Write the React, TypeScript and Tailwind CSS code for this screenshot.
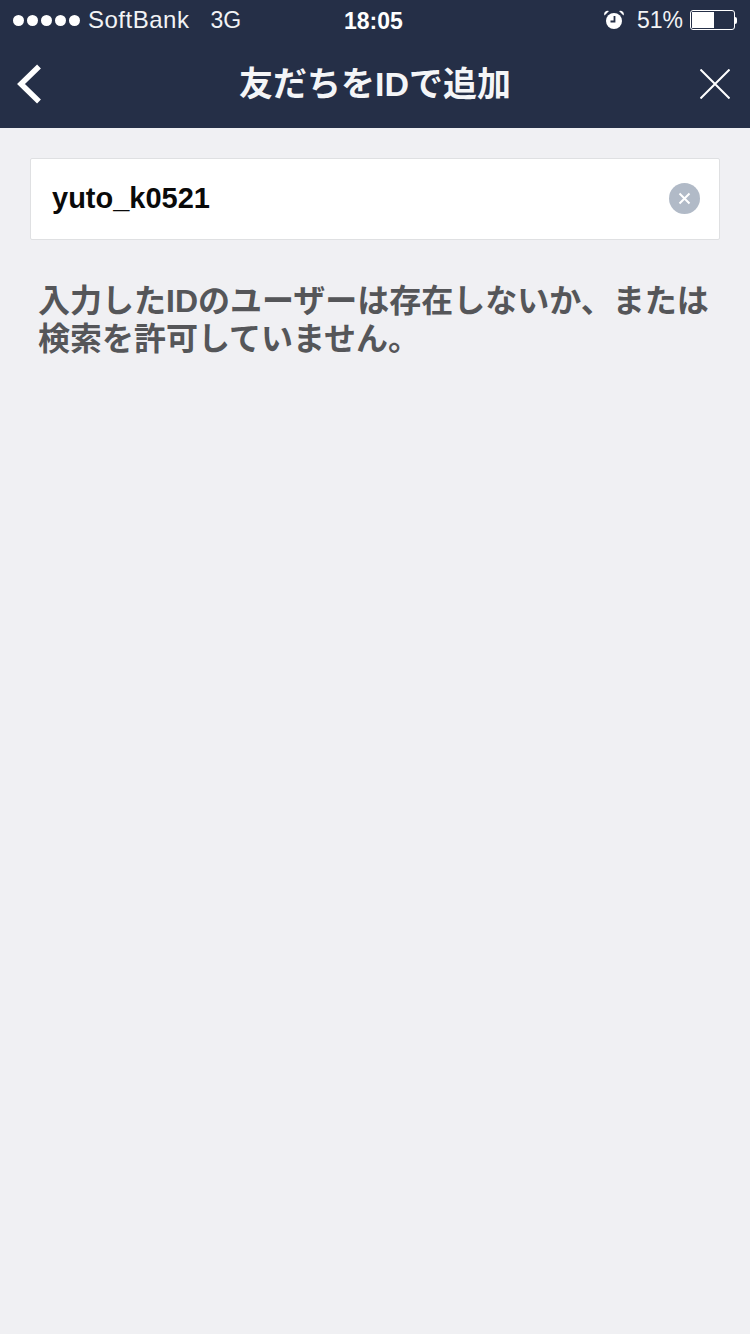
import React from 'react';

const FONT = "font-['Liberation_Sans','Noto_Sans_CJK_JP',sans-serif]";

const AlarmIcon = () => (
  <svg width="20" height="20" viewBox="0 0 20 20" className="shrink-0">
    <circle cx="10" cy="11" r="8" fill="#fff" />
    <path d="M0.5 5.5 L5 1 A3.4 3.4 0 0 0 0.5 5.5Z" fill="#fff" />
    <path d="M19.5 5.5 L15 1 A3.4 3.4 0 0 1 19.5 5.5Z" fill="#fff" />
    <path d="M10.5 6 V11.5 H6.5" stroke="#252f47" strokeWidth="1.8" fill="none" />
  </svg>
);

const StatusBar = () => (
  <div className="relative flex h-10 items-center justify-between pl-[13px] pr-[13px] text-white">
    <div className="flex items-center">
      <div className="flex gap-[3px]">
        {[0, 1, 2, 3, 4].map((i) => (
          <span key={i} className="h-[11px] w-[11px] rounded-full bg-white" />
        ))}
      </div>
      <span className="ml-[8px] text-[24px] leading-none tracking-[0.5px] text-[#f2f3f5]">SoftBank</span>
      <span className="ml-[21px] text-[23px] leading-none text-[#f2f3f5]">3G</span>
    </div>
    <span className="absolute left-[344px] top-[9px] text-[23px] font-bold leading-[24px]">18:05</span>
    <div className="flex items-center">
      <AlarmIcon />
      <span className="ml-[13px] text-[23px] leading-none text-[#f2f3f5]">51%</span>
      <div className="ml-[7px] h-[20px] w-[45px] rounded-[3px] border border-white p-[1px]">
        <div className="h-full w-[22px] bg-white" />
      </div>
      <span className="h-[7px] w-[2px] rounded-r-full bg-white" />
    </div>
  </div>
);

const NavBar = () => (
  <div className="flex h-[88px] items-center justify-between">
    <div className="flex w-[70px] pl-[17px]">
      <svg width="26" height="40" viewBox="0 0 26 40">
        <path d="M22 2.5 L4 20 L22 37.5" stroke="#fff" strokeWidth="5.5" fill="none" />
      </svg>
    </div>
    <h1 className="text-[34px] font-bold leading-none text-[#f4f5f7]">友だちをIDで追加</h1>
    <div className="flex w-[70px] justify-end pr-[20px]">
      <svg width="30" height="30" viewBox="0 0 30 30">
        <path d="M0.5 0.5 L29.5 29.5 M29.5 0.5 L0.5 29.5" stroke="#fff" strokeWidth="2" fill="none" />
      </svg>
    </div>
  </div>
);

export default function App() {
  return (
    <div className={`${FONT} flex h-[1334px] w-[750px] flex-col bg-[#f0f0f3]`}>
      {/* Header */}
      <header className="h-[128px] bg-[#252f47]">
        <StatusBar />
        <NavBar />
      </header>

      <main className="px-[30px] pt-[30px]">
        {/* ID field */}
        <div className="flex h-[82px] items-center justify-between rounded-[2px] border border-[#dfe0e2] bg-white pb-[2px] pl-[21px] pr-[19px]">
          <span className="text-[29px] font-bold leading-none text-[#0a0a0a]">yuto_k0521</span>
          <button className="flex h-[31px] w-[31px] items-center justify-center rounded-full bg-[#b1bac7]">
            <svg width="15" height="15" viewBox="0 0 15 15">
              <path d="M2.5 2.5 L12.5 12.5 M12.5 2.5 L2.5 12.5" stroke="#fff" strokeWidth="2" fill="none" />
            </svg>
          </button>
        </div>

        {/* Result message */}
        <p className="mt-[42px] pl-[8px] text-[32px] font-bold leading-[38px] text-[#555659]">
          入力したIDのユーザーは存在しないか、または
          <br />
          検索を許可していません。
        </p>
      </main>
    </div>
  );
}
